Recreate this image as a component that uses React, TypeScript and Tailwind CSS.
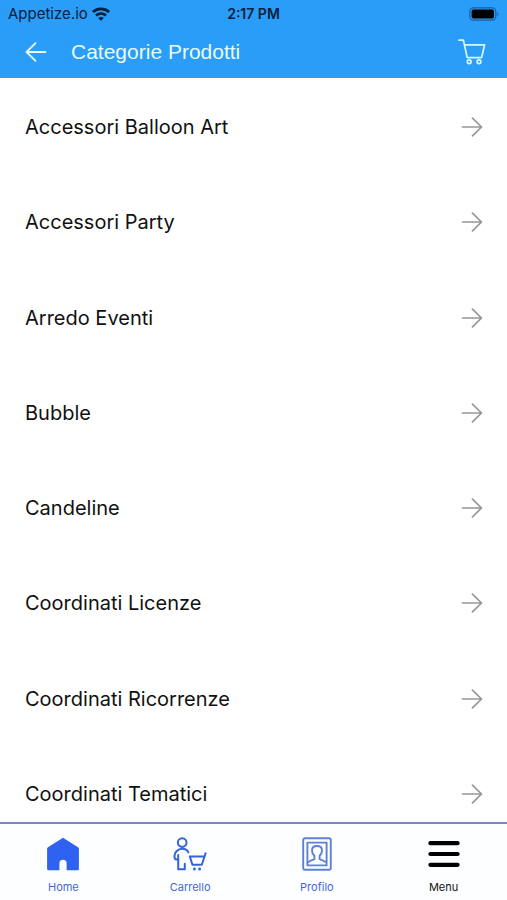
import type { ReactNode } from 'react';

const categories = [
  'Accessori Balloon Art',
  'Accessori Party',
  'Arredo Eventi',
  'Bubble',
  'Candeline',
  'Coordinati Licenze',
  'Coordinati Ricorrenze',
  'Coordinati Tematici',
];

function WifiIcon() {
  return (
    <svg width="18" height="14" viewBox="0 0 18 14" fill="none" stroke="#06203b" strokeWidth="2.7">
      <path d="M.9 5C5.4 .8 12.6 .8 17.1 5" />
      <path d="M4 8.6c2.9-2.6 7.1-2.6 10 0" />
      <path d="M9 13.8 6.2 11c1.6-1.5 4-1.5 5.6 0z" fill="#06203b" stroke="none" />
    </svg>
  );
}

function BatteryIcon() {
  return (
    <svg width="30" height="14" viewBox="0 0 30 14" fill="none">
      <rect x="0.8" y="0.8" width="26" height="12.4" rx="3.6" stroke="#1d5f9c" strokeWidth="1.2" />
      <rect x="2.6" y="2.4" width="22.4" height="9.2" rx="2" fill="#000" />
      <path d="M28.3 5v4c1.5-.6 1.5-3.4 0-4z" fill="#1d5f9c" />
    </svg>
  );
}

function BackIcon() {
  return (
    <svg width="22" height="20" viewBox="0 0 22 20" fill="none" stroke="#e8fbff" strokeWidth="1.8" strokeLinecap="round" strokeLinejoin="round">
      <path d="M20.5 10H1.5M10.5 1.2 1.5 10l9 8.8" />
    </svg>
  );
}

function CartIcon() {
  return (
    <svg width="28" height="26" viewBox="0 0 28 26" fill="none" stroke="#d8f8ff" strokeWidth="1.7" strokeLinecap="round" strokeLinejoin="round">
      <path d="M1 1.2h4.4L9.2 18.6h14.4L26.6 5.8H6.5" />
      <circle cx="11.2" cy="22.8" r="1.9" />
      <circle cx="21" cy="22.8" r="1.9" />
    </svg>
  );
}

function ArrowIcon() {
  return (
    <svg width="22" height="20" viewBox="0 0 22 20" fill="none" stroke="#979797" strokeWidth="1.7" strokeLinecap="round" strokeLinejoin="round">
      <path d="M1.5 10h19M11.5 1.2l9 8.8-9 8.8" />
    </svg>
  );
}

function HomeIcon() {
  return (
    <svg width="34" height="34" viewBox="0 0 34 34" fill="#2f62f0">
      <path d="M17 .8 32 10.2c.6.4.9.9.9 1.6V32c0 .8-.4 1.2-1.2 1.2H20.6V26.4a3.6 3.6 0 0 0-7.2 0v6.8H2.3c-.8 0-1.2-.4-1.2-1.2V11.8c0-.7.3-1.2.9-1.6z" />
    </svg>
  );
}

function ShopperIcon() {
  return (
    <svg width="34" height="34" viewBox="0 0 34 34" fill="none" stroke="#3563dc" strokeWidth="2" strokeLinecap="round" strokeLinejoin="round">
      <circle cx="9.2" cy="5.6" r="4.3" />
      <path d="M15.4 15.4C14.2 13 12.2 11.8 9.4 11.8 4.4 11.8 1.4 15.8 1.4 19.4c0 2 1.2 3.2 3 3.2h.8V32.2h6.6v-5.4" />
      <path d="M5.2 18v4.4" />
      <path d="M32.6 16.2 28.8 27.8H19.4L16.8 19.4H31.4" />
      <path d="M21.4 32v.2M26.6 32v.2" strokeWidth="2.8" />
    </svg>
  );
}

function ProfileIcon() {
  return (
    <svg width="34" height="34" viewBox="0 0 34 34" fill="none" stroke="#5e80d6" strokeWidth="1.9" strokeLinejoin="round">
      <rect x="3.2" y="1.2" width="27.6" height="31.6" rx="1.8" />
      <rect x="7.4" y="5.6" width="19.2" height="22.8" />
      <path d="M8 25.4c1.6-2 3.9-2.4 6.4-3.2v-3.4c-1.7-1.5-2.4-3.6-2.4-5.4 0-2.6 1.9-4.4 5-4.4s5 1.8 5 4.4c0 1.8-.7 3.9-2.4 5.4v3.4c2.5.8 4.8 1.2 6.4 3.2" />
    </svg>
  );
}

function MenuIcon() {
  return (
    <svg width="34" height="34" viewBox="0 0 34 34" fill="none" stroke="#000" strokeWidth="4.2" strokeLinecap="round">
      <path d="M3.4 6.2h27.2M3.4 17h27.2M3.4 27.8h27.2" />
    </svg>
  );
}

function Tab({ label, color, children }: { label: string; color: string; children: ReactNode }) {
  return (
    <a href="#" className={`flex flex-1 flex-col items-center gap-2 pt-[13px] text-[11px] leading-4 ${color}`}>
      {children}
      {label}
    </a>
  );
}

export default function App() {
  return (
    <div className="flex min-h-screen flex-col bg-white font-['Inter',sans-serif]">
      <header className="bg-[#2a9df9] pb-px">
        <div className="grid grid-cols-3 items-center pr-2 pl-2 text-[15px] leading-[27px] text-[#06203b]">
          <div className="flex items-center gap-1">
            <span>Appetize.io</span>
            <WifiIcon />
          </div>
          <span className="text-center text-sm font-semibold">2:17 PM</span>
          <div className="flex justify-end">
            <BatteryIcon />
          </div>
        </div>
        <div className="flex h-[50px] items-center pr-[21px] pl-[25px]">
          <button type="button" aria-label="Indietro">
            <BackIcon />
          </button>
          <h1 className="ml-6 flex-1 font-['Liberation_Sans',Arial,sans-serif] text-[21px] text-[#e8fbff]">Categorie Prodotti</h1>
          <button type="button" aria-label="Carrello">
            <CartIcon />
          </button>
        </div>
      </header>

      <main className="flex flex-1 flex-col">
        <ul className="flex flex-1 flex-col justify-between pt-[25px] pb-1">
          {categories.map((category) => (
            <li key={category}>
              <a href="#" className="flex h-12 items-center justify-between pr-6 pl-[25px] text-xl text-[#111]">
                {category}
                <ArrowIcon />
              </a>
            </li>
          ))}
        </ul>
      </main>

      <nav className="flex h-[78px] border-t-2 border-[#7189c4] bg-[#fdfeff]">
        <Tab label="Home" color="text-[#4466d8]">
          <HomeIcon />
        </Tab>
        <Tab label="Carrello" color="text-[#4466d8]">
          <ShopperIcon />
        </Tab>
        <Tab label="Profilo" color="text-[#4466d8]">
          <ProfileIcon />
        </Tab>
        <Tab label="Menu" color="text-[#111]">
          <MenuIcon />
        </Tab>
      </nav>
    </div>
  );
}
